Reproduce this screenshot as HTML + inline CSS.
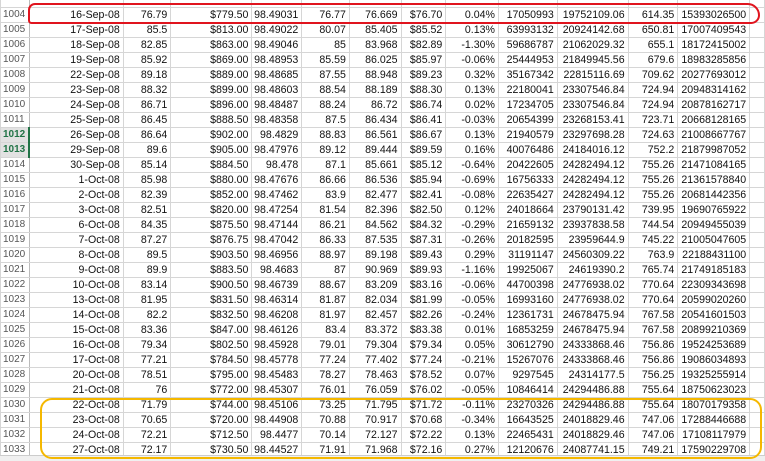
<!DOCTYPE html>
<html><head><meta charset="utf-8"><style>
html,body{margin:0;padding:0;background:#fff;width:765px;height:461px;overflow:hidden;position:relative}
table{position:absolute;left:0;top:-8px;border-collapse:collapse;table-layout:fixed;font-family:"Liberation Sans",sans-serif;font-size:10.6px;color:#111}
td{height:14px;padding:0 3px 0 0;border:1px solid #d6d6d6;text-align:right;white-space:nowrap;overflow:hidden;line-height:14px}
td.n{text-align:left;padding-left:2px;color:#555;font-size:10px;border-right:1px solid #bbb;background:#fff}
td.s{background:#e2e2e2;color:#217346;font-weight:bold;border-right:2px solid #217346}
.red{position:absolute;left:28px;top:3px;width:728px;height:17px;border:2.5px solid #e0141e;border-radius:8px 14px 10px 4px;}
.org{position:absolute;left:40px;top:398px;width:718px;height:57px;border:2.5px solid #f5b800;border-radius:12px}
.bot{position:absolute;left:0;top:455px;width:765px;height:6px;background:#f0f0f0;border-top:1px solid #ccc}
</style></head><body>
<table>
<colgroup><col style="width:25px"><col style="width:95px"><col style="width:48px"><col style="width:82px"><col style="width:50px"><col style="width:48px"><col style="width:52px"><col style="width:45px"><col style="width:53px"><col style="width:59px"><col style="width:71px"><col style="width:50px"><col style="width:72px"><col style="width:15px"></colgroup>
<tr><td class="n"></td><td></td><td></td><td></td><td></td><td></td><td></td><td></td><td></td><td></td><td></td><td></td><td></td><td></td></tr>
<tr><td class="n">1004</td><td>16-Sep-08</td><td>76.79</td><td>$779.50</td><td>98.49031</td><td>76.77</td><td>76.669</td><td>$76.70</td><td>0.04%</td><td>17050993</td><td>19752109.06</td><td>614.35</td><td>15393026500</td><td></td></tr>
<tr><td class="n">1005</td><td>17-Sep-08</td><td>85.5</td><td>$813.00</td><td>98.49022</td><td>80.07</td><td>85.405</td><td>$85.52</td><td>0.13%</td><td>63993132</td><td>20924142.68</td><td>650.81</td><td>17007409543</td><td></td></tr>
<tr><td class="n">1006</td><td>18-Sep-08</td><td>82.85</td><td>$863.00</td><td>98.49046</td><td>85</td><td>83.968</td><td>$82.89</td><td>-1.30%</td><td>59686787</td><td>21062029.32</td><td>655.1</td><td>18172415002</td><td></td></tr>
<tr><td class="n">1007</td><td>19-Sep-08</td><td>85.92</td><td>$869.00</td><td>98.48953</td><td>85.59</td><td>86.025</td><td>$85.97</td><td>-0.06%</td><td>25444953</td><td>21849945.56</td><td>679.6</td><td>18983285856</td><td></td></tr>
<tr><td class="n">1008</td><td>22-Sep-08</td><td>89.18</td><td>$889.00</td><td>98.48685</td><td>87.55</td><td>88.948</td><td>$89.23</td><td>0.32%</td><td>35167342</td><td>22815116.69</td><td>709.62</td><td>20277693012</td><td></td></tr>
<tr><td class="n">1009</td><td>23-Sep-08</td><td>88.32</td><td>$899.00</td><td>98.48603</td><td>88.54</td><td>88.189</td><td>$88.30</td><td>0.13%</td><td>22180041</td><td>23307546.84</td><td>724.94</td><td>20948314162</td><td></td></tr>
<tr><td class="n">1010</td><td>24-Sep-08</td><td>86.71</td><td>$896.00</td><td>98.48487</td><td>88.24</td><td>86.72</td><td>$86.74</td><td>0.02%</td><td>17234705</td><td>23307546.84</td><td>724.94</td><td>20878162717</td><td></td></tr>
<tr><td class="n">1011</td><td>25-Sep-08</td><td>86.45</td><td>$888.50</td><td>98.48358</td><td>87.5</td><td>86.434</td><td>$86.41</td><td>-0.03%</td><td>20654399</td><td>23268153.41</td><td>723.71</td><td>20668128165</td><td></td></tr>
<tr><td class="n s">1012</td><td>26-Sep-08</td><td>86.64</td><td>$902.00</td><td>98.4829</td><td>88.83</td><td>86.561</td><td>$86.67</td><td>0.13%</td><td>21940579</td><td>23297698.28</td><td>724.63</td><td>21008667767</td><td></td></tr>
<tr><td class="n s">1013</td><td>29-Sep-08</td><td>89.6</td><td>$905.00</td><td>98.47976</td><td>89.12</td><td>89.444</td><td>$89.59</td><td>0.16%</td><td>40076486</td><td>24184016.12</td><td>752.2</td><td>21879987052</td><td></td></tr>
<tr><td class="n">1014</td><td>30-Sep-08</td><td>85.14</td><td>$884.50</td><td>98.478</td><td>87.1</td><td>85.661</td><td>$85.12</td><td>-0.64%</td><td>20422605</td><td>24282494.12</td><td>755.26</td><td>21471084165</td><td></td></tr>
<tr><td class="n">1015</td><td>1-Oct-08</td><td>85.98</td><td>$880.00</td><td>98.47676</td><td>86.66</td><td>86.536</td><td>$85.94</td><td>-0.69%</td><td>16756333</td><td>24282494.12</td><td>755.26</td><td>21361578840</td><td></td></tr>
<tr><td class="n">1016</td><td>2-Oct-08</td><td>82.39</td><td>$852.00</td><td>98.47462</td><td>83.9</td><td>82.477</td><td>$82.41</td><td>-0.08%</td><td>22635427</td><td>24282494.12</td><td>755.26</td><td>20681442356</td><td></td></tr>
<tr><td class="n">1017</td><td>3-Oct-08</td><td>82.51</td><td>$820.00</td><td>98.47254</td><td>81.54</td><td>82.396</td><td>$82.50</td><td>0.12%</td><td>24018664</td><td>23790131.42</td><td>739.95</td><td>19690765922</td><td></td></tr>
<tr><td class="n">1018</td><td>6-Oct-08</td><td>84.35</td><td>$875.50</td><td>98.47144</td><td>86.21</td><td>84.562</td><td>$84.32</td><td>-0.29%</td><td>21659132</td><td>23937838.58</td><td>744.54</td><td>20949455039</td><td></td></tr>
<tr><td class="n">1019</td><td>7-Oct-08</td><td>87.27</td><td>$876.75</td><td>98.47042</td><td>86.33</td><td>87.535</td><td>$87.31</td><td>-0.26%</td><td>20182595</td><td>23959644.9</td><td>745.22</td><td>21005047605</td><td></td></tr>
<tr><td class="n">1020</td><td>8-Oct-08</td><td>89.5</td><td>$903.50</td><td>98.46956</td><td>88.97</td><td>89.198</td><td>$89.43</td><td>0.29%</td><td>31191147</td><td>24560309.22</td><td>763.9</td><td>22188431100</td><td></td></tr>
<tr><td class="n">1021</td><td>9-Oct-08</td><td>89.9</td><td>$883.50</td><td>98.4683</td><td>87</td><td>90.969</td><td>$89.93</td><td>-1.16%</td><td>19925067</td><td>24619390.2</td><td>765.74</td><td>21749185183</td><td></td></tr>
<tr><td class="n">1022</td><td>10-Oct-08</td><td>83.14</td><td>$900.50</td><td>98.46739</td><td>88.67</td><td>83.209</td><td>$83.16</td><td>-0.06%</td><td>44700398</td><td>24776938.02</td><td>770.64</td><td>22309343698</td><td></td></tr>
<tr><td class="n">1023</td><td>13-Oct-08</td><td>81.95</td><td>$831.50</td><td>98.46314</td><td>81.87</td><td>82.034</td><td>$81.99</td><td>-0.05%</td><td>16993160</td><td>24776938.02</td><td>770.64</td><td>20599020260</td><td></td></tr>
<tr><td class="n">1024</td><td>14-Oct-08</td><td>82.2</td><td>$832.50</td><td>98.46208</td><td>81.97</td><td>82.457</td><td>$82.26</td><td>-0.24%</td><td>12361731</td><td>24678475.94</td><td>767.58</td><td>20541601503</td><td></td></tr>
<tr><td class="n">1025</td><td>15-Oct-08</td><td>83.36</td><td>$847.00</td><td>98.46126</td><td>83.4</td><td>83.372</td><td>$83.38</td><td>0.01%</td><td>16853259</td><td>24678475.94</td><td>767.58</td><td>20899210369</td><td></td></tr>
<tr><td class="n">1026</td><td>16-Oct-08</td><td>79.34</td><td>$802.50</td><td>98.45928</td><td>79.01</td><td>79.304</td><td>$79.34</td><td>0.05%</td><td>30612790</td><td>24333868.46</td><td>756.86</td><td>19524253689</td><td></td></tr>
<tr><td class="n">1027</td><td>17-Oct-08</td><td>77.21</td><td>$784.50</td><td>98.45778</td><td>77.24</td><td>77.402</td><td>$77.24</td><td>-0.21%</td><td>15267076</td><td>24333868.46</td><td>756.86</td><td>19086034893</td><td></td></tr>
<tr><td class="n">1028</td><td>20-Oct-08</td><td>78.51</td><td>$795.00</td><td>98.45483</td><td>78.27</td><td>78.463</td><td>$78.52</td><td>0.07%</td><td>9297545</td><td>24314177.5</td><td>756.25</td><td>19325255914</td><td></td></tr>
<tr><td class="n">1029</td><td>21-Oct-08</td><td>76</td><td>$772.00</td><td>98.45307</td><td>76.01</td><td>76.059</td><td>$76.02</td><td>-0.05%</td><td>10846414</td><td>24294486.88</td><td>755.64</td><td>18750623023</td><td></td></tr>
<tr><td class="n">1030</td><td>22-Oct-08</td><td>71.79</td><td>$744.00</td><td>98.45106</td><td>73.25</td><td>71.795</td><td>$71.72</td><td>-0.11%</td><td>23270326</td><td>24294486.88</td><td>755.64</td><td>18070179358</td><td></td></tr>
<tr><td class="n">1031</td><td>23-Oct-08</td><td>70.65</td><td>$720.00</td><td>98.44908</td><td>70.88</td><td>70.917</td><td>$70.68</td><td>-0.34%</td><td>16643525</td><td>24018829.46</td><td>747.06</td><td>17288446688</td><td></td></tr>
<tr><td class="n">1032</td><td>24-Oct-08</td><td>72.21</td><td>$712.50</td><td>98.4477</td><td>70.14</td><td>72.127</td><td>$72.22</td><td>0.13%</td><td>22465431</td><td>24018829.46</td><td>747.06</td><td>17108117979</td><td></td></tr>
<tr><td class="n">1033</td><td>27-Oct-08</td><td>72.17</td><td>$730.50</td><td>98.44527</td><td>71.91</td><td>71.968</td><td>$72.16</td><td>0.27%</td><td>12120676</td><td>24087741.15</td><td>749.21</td><td>17590229708</td><td></td></tr>
</table>
<div class="bot"></div>
<div class="red"></div>
<div class="org"></div>
</body></html>
